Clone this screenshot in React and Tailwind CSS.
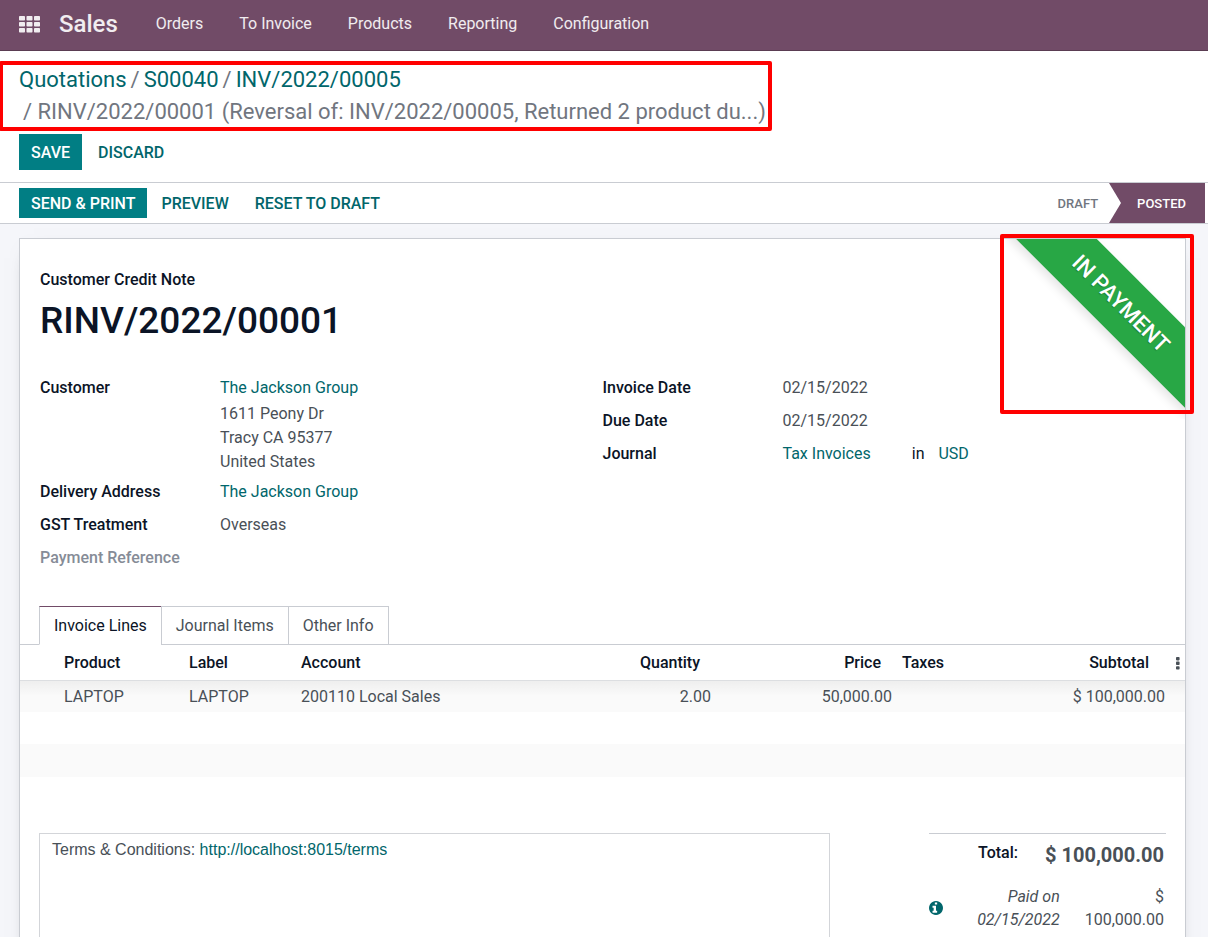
import { useState } from 'react';
import clsx from 'clsx';

const menus = ['Orders', 'To Invoice', 'Products', 'Reporting', 'Configuration'];
const crumbs = ['Quotations', 'S00040', 'INV/2022/00005'];
const tabs = ['Invoice Lines', 'Journal Items', 'Other Info'];

const AppsIcon = () => (
  <svg width="21" height="17" viewBox="0 0 21 17" fill="currentColor" aria-hidden="true">
    {[0, 6, 12].map((y) =>
      [0, 7.5, 15].map((x) => <rect key={`${x}-${y}`} x={x} y={y} width="6" height="4.6" rx="0.8" />)
    )}
  </svg>
);

const DotsIcon = () => (
  <svg width="4" height="13" viewBox="0 0 4 13" fill="currentColor" aria-hidden="true">
    {[0, 4.6, 9.2].map((y) => <rect key={y} y={y} width="3.6" height="3.4" rx="0.8" />)}
  </svg>
);

const InfoIcon = () => (
  <svg width="14" height="14" viewBox="128 128 1536 1536" fill="currentColor" aria-hidden="true">
    <path d="M1024 1376v-160q0-14-9-23t-23-9h-96v-512q0-14-9-23t-23-9h-320q-14 0-23 9t-9 23v160q0 14 9 23t23 9h96v320h-96q-14 0-23 9t-9 23v160q0 14 9 23t23 9h448q14 0 23-9t9-23zM1024 480v-160q0-14-9-23t-23-9h-192q-14 0-23 9t-9 23v160q0 14 9 23t23 9h192q14 0 23-9t9-23zM1664 896q0 209-103 385.5t-279.5 279.5-385.5 103-385.5-103-279.5-279.5-103-385.5 103-385.5 279.5-279.5 385.5-103 385.5 103 279.5 279.5 103 385.5z" />
  </svg>
);

const NavBar = () => (
  <header className="flex h-[51px] shrink-0 items-center border-b border-[#5a3c52] bg-[#714b67] px-[19px] pb-0.5 text-white/90">
    <button aria-label="Apps">
      <AppsIcon />
    </button>
    <a href="#" className="ml-[19px] text-2xl font-medium">Sales</a>
    <nav className="ml-[38px] flex gap-9">
      {menus.map((m) => (
        <a key={m} href="#">{m}</a>
      ))}
    </nav>
  </header>
);

const Button = ({ primary, className, children }) => (
  <button
    className={clsx(
      'px-3 pt-0.5 font-medium uppercase',
      primary ? 'bg-[#017e84] text-white' : 'text-[#01666b]',
      className
    )}
  >
    {children}
  </button>
);

const ControlPanel = () => (
  <div className="shrink-0 border-b border-[#c9ccd2] bg-white px-[19px] pt-[13px] pb-3">
    <div className="relative w-fit">
      <ol className="text-[22px] leading-8 text-[#01666b]">
        {crumbs.map((c, i) => (
          <li key={c} className="inline">
            {i > 0 && <span className="px-1 text-[#71767f]">/</span>}
            <a href="#">{c}</a>
          </li>
        ))}
        <li className="pl-1 text-[#71767f]">
          / RINV/2022/00001 (Reversal of: INV/2022/00005, Returned 2 product du...)
        </li>
      </ol>
      <div className="pointer-events-none absolute -top-[3px] -right-1.5 -bottom-[3px] -left-5 rounded-xs border-4 border-[#ff0000]" />
    </div>
    <div className="mt-1.5 flex gap-1">
      <Button primary className="h-9">Save</Button>
      <Button className="h-9">Discard</Button>
    </div>
  </div>
);

const StatusBar = () => (
  <div className="flex h-[41px] shrink-0 items-center justify-between border-b border-[#c9ccd2] bg-white pr-[3px] pl-[19px]">
    <div className="flex gap-0.5">
      <Button primary className="h-[30px]">Send &amp; Print</Button>
      <Button className="h-[30px]">Preview</Button>
      <Button className="h-[30px]">Reset to Draft</Button>
    </div>
    <div className="flex h-full items-center text-[13px] font-medium">
      <span className="pt-0.5 pr-[11px] text-[#71767f]">DRAFT</span>
      <span className="flex h-full items-center bg-[#714b67] pr-[19px] text-white">
        <svg width="12" height="40" viewBox="0 0 12 40" className="mr-4" aria-hidden="true">
          <path d="M0 0 12 20 0 40Z" fill="#fff" />
        </svg>
        <span className="pt-0.5">POSTED</span>
      </span>
    </div>
  </div>
);

const Ribbon = () => (
  <>
    <div className="absolute top-0 right-0 size-[180px] overflow-hidden">
      <div className="absolute top-0 right-0 flex size-32 items-center justify-center">
        <div className="flex h-[57px] w-[260px] shrink-0 rotate-45 items-center justify-center bg-[#28a745] text-[22px] font-medium text-white shadow-[0_5px_10px_rgba(0,0,0,0.1)] text-shadow-[0_1px_1px_rgba(0,0,0,0.25)]">
          IN PAYMENT
        </div>
      </div>
    </div>
    <div className="pointer-events-none absolute -top-[5px] -right-[9px] h-[180px] w-[194px] rounded-xs border-4 border-[#ff0000]" />
  </>
);

const Field = ({ label, muted, children }) => (
  <div className="mb-[9px] flex leading-6">
    <dt className={clsx('w-[180px] shrink-0 font-medium', muted ? 'text-[#868c97]' : 'text-[#0b1426]')}>{label}</dt>
    <dd>{children}</dd>
  </div>
);

const Link = ({ children }) => <a href="#" className="text-[#01666b]">{children}</a>;

const Details = () => (
  <div className="mt-[31px] grid grid-cols-2 px-5">
    <dl>
      <Field label="Customer">
        <Link>The Jackson Group</Link>
        <address className="mt-0.5 mb-[-3px] not-italic">
          1611 Peony Dr<br />Tracy CA 95377<br />United States
        </address>
      </Field>
      <Field label="Delivery Address"><Link>The Jackson Group</Link></Field>
      <Field label="GST Treatment">Overseas</Field>
      <Field label="Payment Reference" muted />
    </dl>
    <dl>
      <Field label="Invoice Date">02/15/2022</Field>
      <Field label="Due Date">02/15/2022</Field>
      <Field label="Journal">
        <Link>Tax Invoices</Link>
        <span className="mr-3.5 ml-[41px] text-[#0b1426]">in</span>
        <Link>USD</Link>
      </Field>
    </dl>
  </div>
);

const Tabs = () => {
  const [active, setActive] = useState(tabs[0]);
  return (
    <div role="tablist" className="mt-[27px] flex border-b border-[#c9ccd2] pl-[19px]">
      {tabs.map((t) => (
        <button
          key={t}
          role="tab"
          aria-selected={t === active}
          onClick={() => setActive(t)}
          className={clsx(
            '-mr-px -mb-px h-[39px] border px-3.5',
            t === active
              ? 'border-[#c9ccd2] border-t-[#714b67] border-b-white text-[#0b1426]'
              : 'border-[#c9ccd2]'
          )}
        >
          {t}
        </button>
      ))}
    </div>
  );
};

const Lines = () => (
  <table className="w-full table-fixed">
    <colgroup>
      <col className="w-[39px]" />
      <col className="w-[125px]" />
      <col className="w-[112px]" />
      <col />
      <col className="w-[182px]" />
      <col className="w-[181px]" />
      <col className="w-[82px]" />
      <col className="w-[191px]" />
      <col className="w-[15px]" />
    </colgroup>
    <thead className="text-[#0b1426]">
      <tr className="h-[35px] border-b border-[#dcdee1] text-left *:px-[5px] *:pt-0.5 *:font-medium">
        <th />
        <th>Product</th>
        <th>Label</th>
        <th>Account</th>
        <th className="text-right"><span className="pr-[11px]">Quantity</span></th>
        <th className="text-right"><span className="pr-[11px]">Price</span></th>
        <th>Taxes</th>
        <th className="text-right"><span className="pr-4">Subtotal</span></th>
        <td>
          <button aria-label="Optional columns" className="flex w-full justify-center text-[#495057]">
            <DotsIcon />
          </button>
        </td>
      </tr>
    </thead>
    <tbody>
      <tr className="h-8 bg-black/2 bg-linear-to-b from-black/5 to-transparent to-50% *:px-[5px] *:pt-0.5">
        <td />
        <td>LAPTOP</td>
        <td>LAPTOP</td>
        <td>200110 Local Sales</td>
        <td className="text-right">2.00</td>
        <td className="text-right">50,000.00</td>
        <td />
        <td className="text-right whitespace-nowrap">$ 100,000.00</td>
        <td />
      </tr>
      <tr className="h-8"><td colSpan={9} /></tr>
      <tr className="h-[33px] bg-black/2"><td colSpan={9} /></tr>
      <tr className="h-8"><td colSpan={9} /></tr>
    </tbody>
  </table>
);

const Footer = () => (
  <div className="mt-6 flex items-start pr-[19px] pb-10 pl-[19px]">
    <div className="mr-[99px] h-44 flex-1 border border-[#d3d5d9] px-3 py-1 font-['Liberation_Sans',Arial,sans-serif] leading-6">
      Terms &amp; Conditions: <Link>http://localhost:8015/terms</Link>
    </div>
    <div className="w-[237px] border-t border-[#c9ccd2] pt-[7px] text-right">
      <div className="flex justify-end gap-[27px] pr-0.5">
        <span className="font-medium text-[#0b1426]">Total:</span>
        <span className="text-xl leading-7 font-bold">$ 100,000.00</span>
      </div>
      <div className="mt-4 flex items-center pr-0.5 leading-[23px]">
        <button aria-label="Payment info" className="mr-auto text-[#01666b]">
          <InfoIcon />
        </button>
        <em className="w-min">Paid on 02/15/2022</em>
        <span className="ml-[25px] w-min">$ 100,000.00</span>
      </div>
    </div>
  </div>
);

export default function App() {
  return (
    <div className="flex h-screen flex-col bg-[#f5f6fa] font-[Roboto,sans-serif] text-base text-[#495057]">
      <NavBar />
      <ControlPanel />
      <StatusBar />
      <main className="min-h-0 flex-1 overflow-y-auto [scrollbar-width:none]">
        <section className="relative mt-3.5 mr-[22px] ml-[19px] border border-[#c9ccd2] bg-white pt-[29px] shadow-[0_5px_20px_-15px_rgba(0,0,0,0.6)]">
          <div className="px-5 text-[#0b1426]">
            <p className="font-medium">Customer Credit Note</p>
            <h1 className="mt-[5px] text-[37px] leading-12 font-medium">RINV/2022/00001</h1>
          </div>
          <Details />
          <Tabs />
          <Lines />
          <Footer />
          <Ribbon />
        </section>
      </main>
    </div>
  );
}
